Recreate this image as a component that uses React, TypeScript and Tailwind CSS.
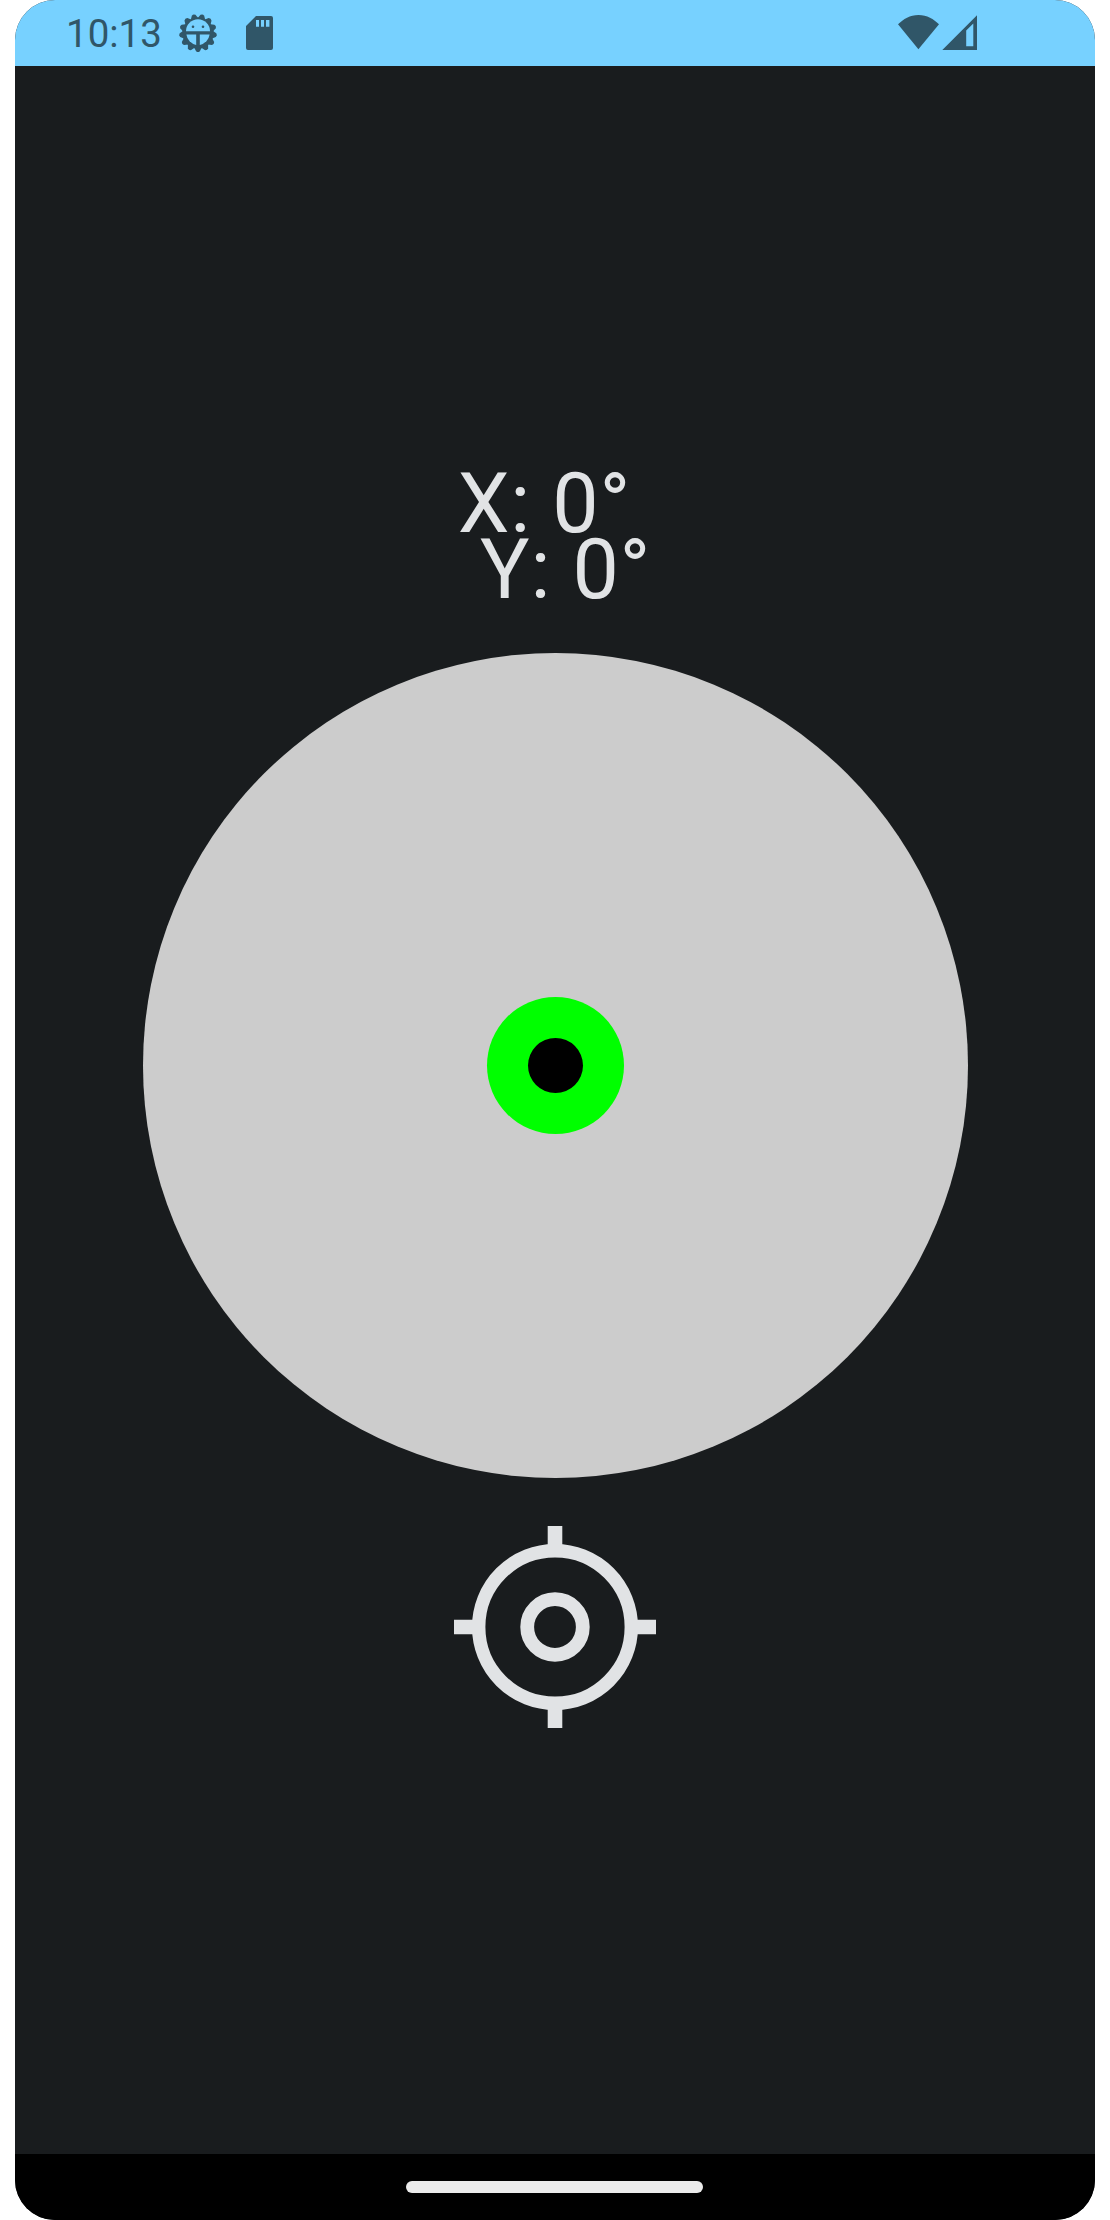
const TEETH = 13;

function DebugIcon() {
  return (
    <svg className="ml-[15px] size-[42px] shrink-0" viewBox="-21 -21 42 42" fill="#305668">
      <circle r="15.6" />
      {Array.from({ length: TEETH }, (_, i) => (
        <path key={i} d="M-3.8 14.6L-1.9 18.2Q0 19.9 1.9 18.2L3.8 14.6Z" transform={`rotate(${(i * 360) / TEETH})`} />
      ))}
      <g fill="#77d1ff">
        <path d="M-12 -1.7A12 12 0 0 1 12 -1.7Z" />
        <path d="M-11.6 1.6H-1.8V11.9A12 12 0 0 1 -11.6 1.6Z" />
        <path d="M11.6 1.6H1.8V11.9A12 12 0 0 0 11.6 1.6Z" />
      </g>
      <circle cx="-5" cy="-6.2" r="1.3" />
      <circle cx="5" cy="-6.2" r="1.3" />
    </svg>
  );
}

function SdCardIcon() {
  return (
    <svg className="ml-[27px] h-[34px] w-[27px] shrink-0" viewBox="0 0 27 34" fill="#305668">
      <path
        fillRule="evenodd"
        d="M10 0H25Q27 0 27 2V32Q27 34 25 34H2Q0 34 0 32V10ZM10 4V10.7H13V4ZM15 4V10.7H18V4ZM20 4V10.7H23.4V4Z"
      />
    </svg>
  );
}

function WifiIcon() {
  return (
    <svg className="h-[35px] w-[41px]" viewBox="0 0 41 35" fill="#305668">
      <path d="M20.4 34.3L0 9.3C5.3 4.2 12 0 20.5 0S35.7 4.2 41 9.3Z" />
    </svg>
  );
}

function SignalIcon() {
  return (
    <svg className="ml-[3px] h-[35px] w-[35px]" viewBox="0 0 35 35" fill="#305668">
      <path fillRule="evenodd" d="M0.3 35L35 0.2V35ZM24.2 15.5V31.2H31.3V8.6Z" />
    </svg>
  );
}

function TargetIcon() {
  return (
    <svg className="mt-[47.5px] size-[202px] shrink-0" viewBox="-101 -101 202 202" fill="none" stroke="#e1e3e5">
      <circle r="76.3" strokeWidth="13.4" />
      <circle r="27.8" strokeWidth="13.8" />
      <path d="M0 -101V-80M0 80V101M-101 0H-80M80 0H101" strokeWidth="14.6" />
    </svg>
  );
}

export default function App() {
  return (
    <div className="flex h-[2220px] w-[1110px] justify-center bg-white font-[Roboto,sans-serif]">
      <div className="flex w-[1080px] flex-col overflow-hidden rounded-[40px] bg-[#191c1e]">
        <header className="flex h-[66px] shrink-0 items-center bg-[#77d1ff] pl-[51px] pr-[118px]">
          <span className="mt-[2px] text-[38.5px] leading-[46px] text-[#305668]">10:13</span>
          <DebugIcon />
          <SdCardIcon />
          <div className="-mt-px ml-auto flex">
            <WifiIcon />
            <SignalIcon />
          </div>
        </header>
        <main className="flex flex-1 flex-col items-center pt-[405px]">
          <div className="whitespace-pre text-center text-[82.5px] leading-[66px] tracking-[0.8px] text-[#e1e3e5]">
            <div>{"X: 0° "}</div>
            <div>{" Y: 0°"}</div>
          </div>
          <div className="ml-px mt-[50px] flex size-[825px] shrink-0 items-center justify-center rounded-full bg-[#cccccc]">
            <div className="flex size-[137.5px] items-center justify-center rounded-full bg-[#00ff00]">
              <div className="size-[55px] rounded-full bg-black" />
            </div>
          </div>
          <TargetIcon />
        </main>
        <footer className="flex h-[66px] shrink-0 justify-center bg-black pr-px pt-[27px]">
          <div className="h-[12px] w-[297px] rounded-full bg-[#ebebeb]" />
        </footer>
      </div>
    </div>
  );
}
